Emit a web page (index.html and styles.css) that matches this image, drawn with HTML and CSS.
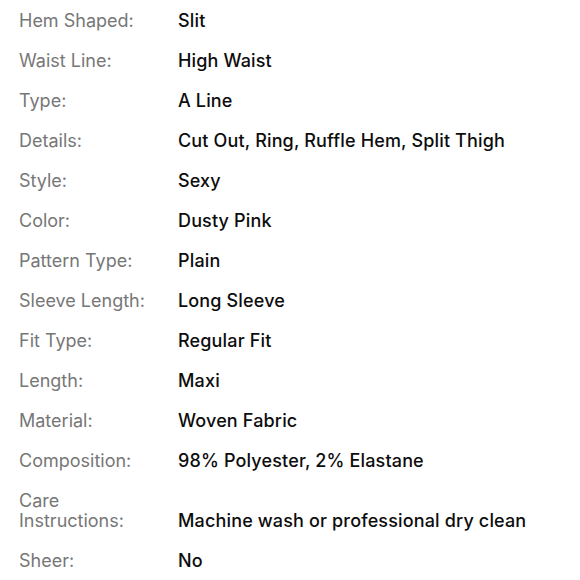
FILE: index.html
```html
<!DOCTYPE html>
<html>
<head>
<meta charset="utf-8">
<link rel="stylesheet" href="styles.css">
</head>
<body>
<dl class="specs">
  <div class="row"><dt>Hem Shaped:</dt><dd>Slit</dd></div>
  <div class="row"><dt>Waist Line:</dt><dd>High Waist</dd></div>
  <div class="row"><dt>Type:</dt><dd>A Line</dd></div>
  <div class="row"><dt>Details:</dt><dd>Cut Out, Ring, Ruffle Hem, Split Thigh</dd></div>
  <div class="row"><dt>Style:</dt><dd>Sexy</dd></div>
  <div class="row"><dt>Color:</dt><dd>Dusty Pink</dd></div>
  <div class="row"><dt>Pattern Type:</dt><dd>Plain</dd></div>
  <div class="row"><dt>Sleeve Length:</dt><dd>Long Sleeve</dd></div>
  <div class="row"><dt>Fit Type:</dt><dd>Regular Fit</dd></div>
  <div class="row"><dt>Length:</dt><dd>Maxi</dd></div>
  <div class="row"><dt>Material:</dt><dd>Woven Fabric</dd></div>
  <div class="row"><dt>Composition:</dt><dd>98% Polyester, 2% Elastane</dd></div>
  <div class="row"><dt>Care<br>Instructions:</dt><dd>Machine wash or professional dry clean</dd></div>
  <div class="row"><dt>Sheer:</dt><dd>No</dd></div>
</dl>
</body>
</html>
```
FILE: styles.css
```css
html, body {
  margin: 0;
  padding: 0;
  background: #ffffff;
}
body {
  font-family: Inter, "Noto Sans", sans-serif;
  font-size: 18px;
  line-height: 20px;
  letter-spacing: 0.15px;
}
.specs {
  margin: 0;
  padding: 11px 0 0 19px;
  display: flex;
  flex-direction: column;
  gap: 20px;
}
.row {
  display: flex;
  align-items: last baseline;
}
.row dt {
  width: 159px;
  flex: none;
  color: #777777;
  font-weight: 400;
  letter-spacing: 0;
}
.row dd {
  margin: 0;
  color: #0d0d0d;
  font-weight: 500;
}
```
